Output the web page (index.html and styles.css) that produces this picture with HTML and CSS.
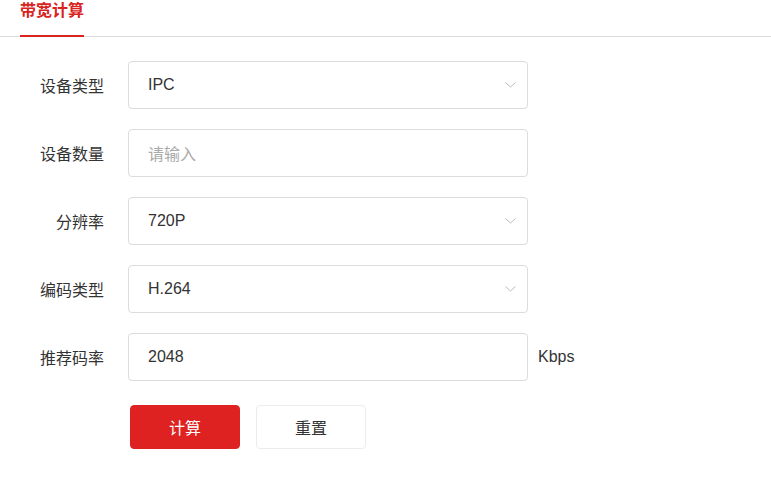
FILE: index.html
```html
<!DOCTYPE html>
<html lang="zh">
<head>
<meta charset="utf-8">
<title>带宽计算</title>
<link rel="stylesheet" href="styles.css">
</head>
<body>
<div class="tabs">
  <div class="tab active">带宽计算</div>
</div>
<form class="form">
  <div class="row">
    <label class="label">设备类型</label>
    <div class="field select"><span class="value">IPC</span><svg class="chev" width="11" height="6" viewBox="0 0 11 6"><path d="M0.5 0.5 L5.5 5 L10.5 0.5" fill="none" stroke="#bbb" stroke-width="1"/></svg></div>
  </div>
  <div class="row">
    <label class="label">设备数量</label>
    <div class="field"><span class="placeholder">请输入</span></div>
  </div>
  <div class="row">
    <label class="label">分辨率</label>
    <div class="field select"><span class="value">720P</span><svg class="chev" width="11" height="6" viewBox="0 0 11 6"><path d="M0.5 0.5 L5.5 5 L10.5 0.5" fill="none" stroke="#bbb" stroke-width="1"/></svg></div>
  </div>
  <div class="row">
    <label class="label">编码类型</label>
    <div class="field select"><span class="value">H.264</span><svg class="chev" width="11" height="6" viewBox="0 0 11 6"><path d="M0.5 0.5 L5.5 5 L10.5 0.5" fill="none" stroke="#bbb" stroke-width="1"/></svg></div>
  </div>
  <div class="row">
    <label class="label">推荐码率</label>
    <div class="field"><span class="value">2048</span></div>
    <span class="unit">Kbps</span>
  </div>
  <div class="actions">
    <button type="button" class="btn primary">计算</button>
    <button type="button" class="btn">重置</button>
  </div>
</form>
</body>
</html>
```
FILE: styles.css
```css
* { box-sizing: border-box; }
body {
  margin: 0;
  background: #fff;
  font-family: "Liberation Sans", "Noto Sans CJK SC", sans-serif;
  color: #333;
  font-size: 16px;
}
.tabs {
  height: 37px;
  border-bottom: 1px solid #dcdcdc;
  padding-left: 20px;
  display: flex;
}
.tab {
  font-weight: bold;
  color: #d9231d;
  line-height: 22px;
  padding-top: 0;
  height: 37px;
  border-bottom: 2px solid #d9231d;
  margin-bottom: -1px;
}
.form {
  padding-top: 24px;
  display: flex;
  flex-direction: column;
  gap: 20px;
}
.row {
  display: flex;
  align-items: center;
  height: 48px;
}
.label {
  width: 104px;
  text-align: right;
  margin-right: 24px;
  color: #333;
}
.field {
  width: 400px;
  height: 48px;
  border: 1px solid #dcdcdc;
  border-radius: 4px;
  padding: 0 19px;
  display: flex;
  align-items: center;
  justify-content: space-between;
}
.value { color: #333; }
.placeholder { color: #aaa; }
.chev { margin-right: -8px; }
.unit {
  margin-left: 10px;
  color: #333;
}
.actions {
  display: flex;
  gap: 16px;
  padding-left: 130px;
  margin-top: 4px;
}
.btn {
  width: 110px;
  height: 44px;
  border: 1px solid #ececec;
  border-radius: 4px;
  background: #fff;
  color: #333;
  font-family: "Liberation Sans", "Noto Sans CJK SC", sans-serif;
  font-size: 16px;
  padding: 0;
}
.btn.primary {
  background: #de2222;
  border-color: #de2222;
  color: #fff;
}
```
